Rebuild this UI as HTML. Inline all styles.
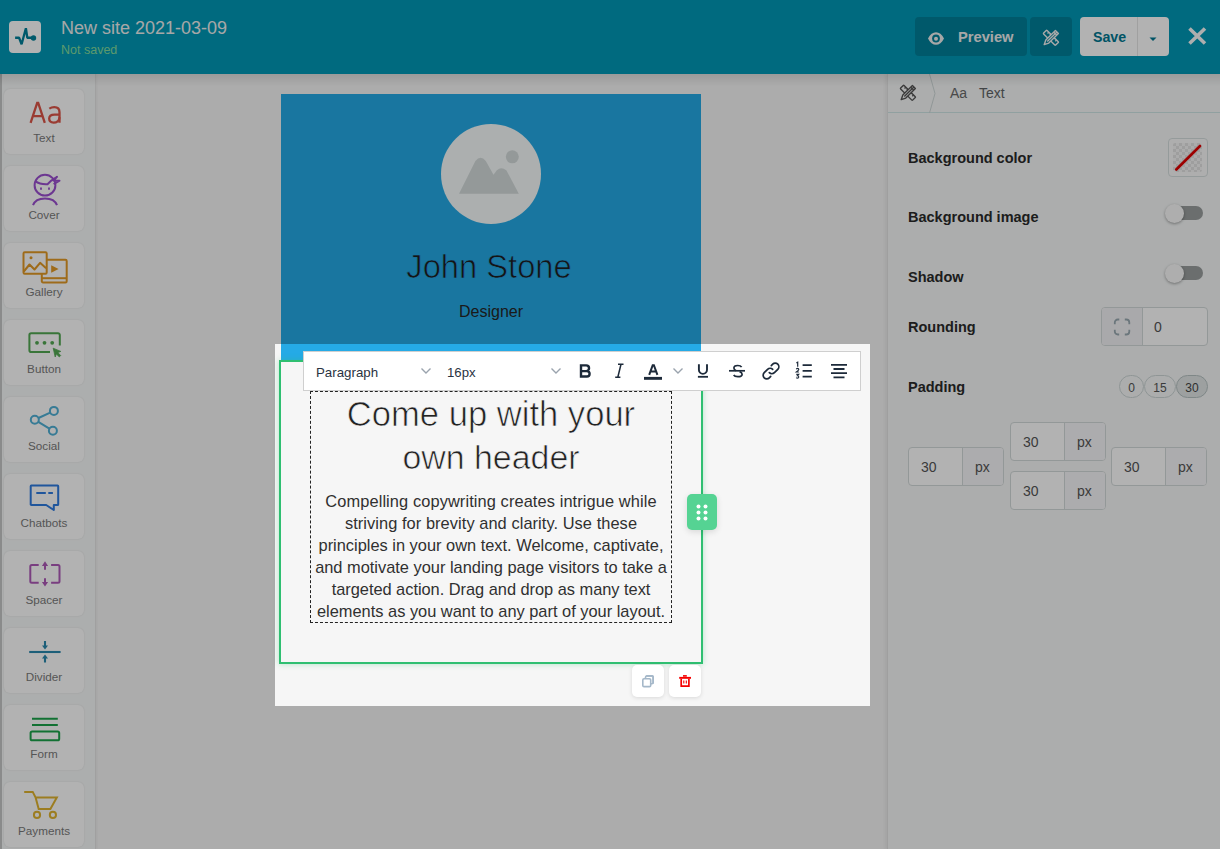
<!DOCTYPE html>
<html><head><meta charset="utf-8">
<style>
*{box-sizing:border-box;margin:0;padding:0}
html,body{width:1220px;height:849px;overflow:hidden}
body{position:relative;background:#f6f6f6;font-family:"Liberation Sans",sans-serif;color:#222}
.a{position:absolute}
.nw{white-space:nowrap}
/* header */
#hdr{left:0;top:0;width:1220px;height:74px;background:#0099b6}
#hdrsh{left:0;top:74px;width:1220px;height:12px;background:linear-gradient(rgba(0,0,0,.1),rgba(0,0,0,0))}
/* sidebar */
#side{left:0;top:74px;width:95.5px;height:775px;background:#f7f9f9;border-right:1.5px solid #e6e6e6;box-shadow:1px 0 2px rgba(0,0,0,.04)}
#sidestrip{left:0;top:74px;width:2px;height:775px;background:#c6c8c8}
.card{left:4px;width:80px;height:65px;background:#fff;border-radius:6px;box-shadow:0 0 2px rgba(0,0,0,.1)}
.lbl{left:4px;width:80px;text-align:center;font-size:11.7px;color:#7a7a7a;line-height:12px}
/* right panel */
#rp{left:887px;top:74px;width:333px;height:775px;background:#f6f8f8;border-left:1px solid #e4e4e4;box-shadow:-2px 0 3px rgba(0,0,0,.05)}
.rl{left:908px;font-size:14.5px;font-weight:700;color:#2a2a2a;line-height:16px}
.pl{left:281px;width:420px;text-align:center;font-size:16.4px;line-height:22px;color:#303030}
.inp{background:#fff;border:1px solid #d3dada;border-radius:4px}
</style></head><body>

<!-- ============ HEADER ============ -->
<div class="a" id="hdr"></div>
<div class="a" style="left:9px;top:21px;width:32px;height:32px;border-radius:4px;background:#fff"></div>
<div class="a nw" style="left:61px;top:18px;font-size:18px;line-height:20px;color:#f0f0f0">New site 2021-03-09</div>
<div class="a nw" style="left:61px;top:42.5px;font-size:12.5px;line-height:14px;color:#86dc9c">Not saved</div>

<div class="a" style="left:915px;top:17px;width:112px;height:39px;border-radius:4px;background:#00809a"></div>
<div class="a nw" style="left:958px;top:29px;font-size:14.7px;line-height:17px;font-weight:700;color:#f0f0f0">Preview</div>
<div class="a" style="left:1030px;top:17px;width:42px;height:39px;border-radius:4px;background:#00809a"></div>
<div class="a" style="left:1080px;top:17px;width:89px;height:39px;border-radius:4px;background:#fff"></div>
<div class="a" style="left:1137px;top:17px;width:1px;height:39px;background:#e6e6e6"></div>
<div class="a nw" style="left:1093px;top:29px;font-size:14.2px;line-height:17px;font-weight:700;color:#007891">Save</div>
<svg class="a" style="left:1145px;top:30.5px" width="16" height="16" viewBox="0 0 16 16"><path d="M4.5 6.5h7l-3.5 3.5z" fill="#007891"/></svg>
<svg class="a" style="left:1186px;top:26px" width="22" height="20" viewBox="0 0 22 20"><path d="M3.5 2.5L19 17.5M19 2.5L3.5 17.5" stroke="#fafafa" stroke-width="3.6" fill="none"/></svg>
<!-- logo pulse -->
<svg class="a" style="left:9px;top:21px" width="32" height="32" viewBox="0 0 32 32"><path d="M6.1 16.75h4L12.6 23.3 16.9 7.2l1.4 9.55h6" stroke="#00809a" stroke-width="2.3" fill="none" stroke-linejoin="bevel" stroke-linecap="butt"/><circle cx="24.5" cy="17" r="2.7" fill="#00809a"/></svg>
<!-- eye -->
<svg class="a" style="left:926px;top:28px" width="20" height="20" viewBox="0 0 20 20"><path d="M2 10.5C4 6.2 7 4.2 10 4.2s6 2 8 6.3C16 14.8 13 16.8 10 16.8s-6-2-8-6.3z" fill="#f0f0f0"/><circle cx="10" cy="10.5" r="3.9" fill="#00809a"/><circle cx="10" cy="10.7" r="2" fill="#f0f0f0"/></svg>
<!-- tools -->
<svg class="a" style="left:1038px;top:25px" width="26" height="26" viewBox="0 0 26 26" fill="none" stroke="#f2f2f2" stroke-width="1.4" stroke-linejoin="round"><g transform="translate(12.95 12.8) rotate(45)"><rect x="-8.5" y="-2.45" width="17" height="4.9" rx=".6"/><path d="M-5.5 -2.45v1.8M-2.8 -2.45v1.2M2.8 -2.45v1.2M5.5 -2.45v1.8"/></g><g transform="translate(12.55 13.3) rotate(-45)"><path d="M9 -2.1H-4.6L-9 0-4.6 2.1H9z" fill="#00809a"/><path d="M9 0H-4.6M6.6 -2.1v4.2"/></g></svg>


<!-- ============ SIDEBAR ============ -->
<div class="a" id="side"></div>
<div class="a" id="sidestrip"></div>
<div class="a card" style="top:89px"></div>
<div class="a lbl nw" style="top:132px">Text</div>
<div class="a card" style="top:166px"></div>
<div class="a lbl nw" style="top:209px">Cover</div>
<div class="a card" style="top:243px"></div>
<div class="a lbl nw" style="top:286px">Gallery</div>
<div class="a card" style="top:320px"></div>
<div class="a lbl nw" style="top:363px">Button</div>
<div class="a card" style="top:397px"></div>
<div class="a lbl nw" style="top:440px">Social</div>
<div class="a card" style="top:474px"></div>
<div class="a lbl nw" style="top:517px">Chatbots</div>
<div class="a card" style="top:551px"></div>
<div class="a lbl nw" style="top:594px">Spacer</div>
<div class="a card" style="top:628px"></div>
<div class="a lbl nw" style="top:671px">Divider</div>
<div class="a card" style="top:705px"></div>
<div class="a lbl nw" style="top:748px">Form</div>
<div class="a card" style="top:782px"></div>
<div class="a lbl nw" style="top:825px">Payments</div>
<!-- Text Aa -->
<svg class="a" style="left:14px;top:90px" width="60" height="60" viewBox="0 0 60 60" fill="none" stroke="#dd5548" stroke-width="2.3"><path d="M16.6 32.8L23.2 12.9h1L30.8 32.8M19.2 26.2h9.1"/><path d="M45.5 32.8V22.3c0-3.4-1.8-5.1-5.2-5.1-1.9 0-3.6.5-5 1.4"/><path d="M45.5 24.6h-5c-3.4 0-5.3 1.3-5.3 4 0 2.4 1.7 4 4.4 4 2.9 0 5.9-1.6 5.9-5.3"/></svg>
<!-- Cover -->
<svg class="a" style="left:14px;top:168px" width="60" height="60" viewBox="0 0 60 60" fill="none" stroke="#9b4fd0" stroke-width="2"><circle cx="31" cy="17.2" r="10.4"/><path d="M21.2 13.1Q26 16.6 33.5 16.2L37.3 12.6 43 8.8 39.6 12.5 45.5 12.7 39.6 16.2" stroke-linejoin="round"/><path d="M19 37.2c1.5-4.2 5.5-6.8 12-6.8s10.5 2.6 12 6.8"/><path d="M27 19.5v2.2M35 19.5v2.2" stroke-width="1.8"/></svg>
<!-- Gallery -->
<svg class="a" style="left:14px;top:245px" width="60" height="60" viewBox="0 0 60 60" fill="none" stroke="#e39a26" stroke-width="2" stroke-linejoin="round"><rect x="9.5" y="7.2" width="23.2" height="21.5" rx="1.2"/><path d="M32.7 14.8h18.8a1.2 1.2 0 0 1 1.2 1.2v20.3a1.2 1.2 0 0 1-1.2 1.2H29a1.2 1.2 0 0 1-1.2-1.2v-7.5"/><path d="M28 33.2h24.5"/><circle cx="17" cy="12.7" r="1.5" fill="#e39a26" stroke="none"/><path d="M9.8 26.5l5.7-7 5 5 5.6-6.7 6 5.4"/><path d="M37.2 20.2l7.4 3.8-7.4 3.7z" fill="#e39a26" stroke="none"/></svg>
<!-- Button -->
<svg class="a" style="left:14px;top:320px" width="60" height="60" viewBox="0 0 60 60" fill="none" stroke="#52a852" stroke-width="2"><path d="M36 32H17.2a1.8 1.8 0 0 1-1.8-1.8V15.1a1.8 1.8 0 0 1 1.8-1.8H44a1.8 1.8 0 0 1 1.8 1.8v10.5"/><circle cx="23" cy="22.8" r="1.9" fill="#52a852" stroke="none"/><circle cx="30.5" cy="22.8" r="1.9" fill="#52a852" stroke="none"/><circle cx="38.2" cy="22.8" r="1.9" fill="#52a852" stroke="none"/><path d="M39.2 28.2l7.6 3.2-3 1.2 2.9 2.9-1.4 1.4-2.9-2.9-1.2 3z" fill="#52a852" stroke="#52a852" stroke-width="0.8" stroke-linejoin="round"/></svg>
<!-- Social -->
<svg class="a" style="left:14px;top:395px" width="60" height="60" viewBox="0 0 60 60" fill="none" stroke="#4fb0d6" stroke-width="2"><circle cx="39.9" cy="15.9" r="4"/><circle cx="20.8" cy="24.7" r="4"/><circle cx="38.9" cy="35.7" r="4"/><path d="M24.5 23l11.7-5.4M24.3 26.8l11.1 6.8"/></svg>
<!-- Chatbots -->
<svg class="a" style="left:14px;top:475px" width="60" height="60" viewBox="0 0 60 60" fill="none" stroke="#2f7be0" stroke-width="2" stroke-linejoin="round"><path d="M17.3 10.6h26.3a.6.6 0 0 1 .6.6v18.2a.6.6 0 0 1-.6.6h-3.8v5l-7.6-5H17.3a.6.6 0 0 1-.6-.6V11.2a.6.6 0 0 1 .6-.6z"/><path d="M22.3 18h9.5M34.3 18h4.6" stroke-width="2.1"/></svg>
<!-- Spacer -->
<svg class="a" style="left:14px;top:550px" width="60" height="60" viewBox="0 0 60 60" fill="none" stroke="#ae5ab8" stroke-width="2"><path d="M24.7 15H17.8a1.5 1.5 0 0 0-1.5 1.5v14.8a1.5 1.5 0 0 0 1.5 1.5h6.9M37.1 15H44a1.5 1.5 0 0 1 1.5 1.5v14.8a1.5 1.5 0 0 1-1.5 1.5h-6.9"/><path d="M31 19.8V15.5M31 28.3v4.2"/><path d="M27.9 16L31 11.3l3.1 4.7zM27.9 32L31 36.5l3.1-4.5z" fill="#ae5ab8" stroke="none"/></svg>
<!-- Divider -->
<svg class="a" style="left:14px;top:628px" width="60" height="60" viewBox="0 0 60 60" fill="none" stroke="#2a88ae" stroke-width="2.1"><path d="M15.2 24h31.4"/><path d="M31 13v5M31 34.6v-5"/><path d="M28 17.4L31 21.4l3-4zM28 30.4L31 26.4l3 4z" fill="#2a88ae" stroke="none"/></svg>
<!-- Form -->
<svg class="a" style="left:14px;top:705px" width="60" height="60" viewBox="0 0 60 60" fill="none" stroke="#1ba34a" stroke-width="2"><path d="M18 13.8h25.8M18 20h25.8"/><rect x="16.6" y="26.5" width="28.6" height="8.8" rx="1.6"/></svg>
<!-- Payments -->
<svg class="a" style="left:14px;top:782px" width="60" height="60" viewBox="0 0 60 60" fill="none" stroke="#e0b430" stroke-width="2"><path d="M10.2 9.9h8.5l2.9 5.6h21.2l-6.4 11.4H24.7l-3.1-11.4"/><circle cx="23" cy="32.9" r="3.1"/><circle cx="38.9" cy="32.9" r="3.1"/></svg>


<!-- ============ CANVAS ============ -->
<div class="a" style="left:281px;top:94px;width:420px;height:266px;background:#25aae6"></div>
<div class="a" style="left:441px;top:124px;width:100px;height:100px;border-radius:50%;background:#f6fbfb"></div>
<svg class="a" style="left:441px;top:124px" width="100" height="100" viewBox="0 0 100 100"><path d="M18 69.8L34.4 37.1Q39.6 30.5 44.8 37.1L52.5 50.8 55.8 46.2Q60.4 42 65.5 46.5L77.8 69.8z" fill="#d5dcdc"/><circle cx="71.3" cy="32.8" r="6.5" fill="#d5dcdc"/></svg>
<div class="a nw" style="left:279px;top:246.5px;width:420px;text-align:center;font-size:32.7px;line-height:40px;color:#1e1e1e;-webkit-text-stroke:.7px #25aae6">John Stone</div>
<div class="a nw" style="left:281px;top:302.5px;width:420px;text-align:center;font-size:16px;line-height:18px;color:#262626">Designer</div>

<!-- section -->
<div class="a" style="left:279px;top:360px;width:424px;height:304px;border:2px solid #2fbf71;box-shadow:0 0 6px rgba(47,191,113,.35)"></div>
<div class="a" style="left:310px;top:391px;width:362px;height:232px;border:1px dashed #222"></div>
<div class="a nw" style="left:281px;top:393px;width:420px;text-align:center;font-size:34.6px;line-height:43px;color:#222;-webkit-text-stroke:.7px #f6f6f6">Come up with your</div>
<div class="a nw" style="left:281px;top:436px;width:420px;text-align:center;font-size:33.9px;line-height:43px;color:#222;-webkit-text-stroke:.7px #f6f6f6">own header</div>
<div class="a nw pl" id="pl0" style="top:490px;letter-spacing:.094px">Compelling copywriting creates intrigue while</div>
<div class="a nw pl" id="pl1" style="top:512px;letter-spacing:.064px">striving for brevity and clarity. Use these</div>
<div class="a nw pl" id="pl2" style="top:534px">principles in your own text. Welcome, captivate,</div>
<div class="a nw pl" id="pl3" style="top:556px">and motivate your landing page visitors to take a</div>
<div class="a nw pl" id="pl4" style="top:578px;letter-spacing:-.026px">targeted action. Drag and drop as many text</div>
<div class="a nw pl" id="pl5" style="top:600px">elements as you want to any part of your layout.</div>


<!-- drag handle -->
<div class="a" style="left:687px;top:494px;width:30px;height:36px;border-radius:5px;background:#55d393;box-shadow:0 2px 6px rgba(0,0,0,.12)"></div>
<svg class="a" style="left:687px;top:494px" width="30" height="36" viewBox="0 0 30 36" fill="#fff"><circle cx="11.5" cy="12.5" r="2"/><circle cx="18.5" cy="12.5" r="2"/><circle cx="11.5" cy="18.5" r="2"/><circle cx="18.5" cy="18.5" r="2"/><circle cx="11.5" cy="24.5" r="2"/><circle cx="18.5" cy="24.5" r="2"/></svg>

<!-- copy / delete -->
<div class="a" style="left:632px;top:665px;width:32px;height:32px;border-radius:5px;background:#fff;box-shadow:0 1px 4px rgba(0,0,0,.12)"></div>
<svg class="a" style="left:632px;top:665px" width="32" height="32" viewBox="0 0 32 32" fill="none" stroke="#a5b8c9" stroke-width="1.6"><path d="M14.2 10.9h6a.9.9 0 0 1 .9.9v6.6" /><rect x="10.8" y="13.7" width="7.9" height="7.9" rx="1.2" fill="#fff"/><path d="M13.5 13.7v-1.5a1.2 1.2 0 0 1 1.2-1.2h5.3a1.2 1.2 0 0 1 1.2 1.2v5.4a1.2 1.2 0 0 1-1.2 1.2h-1.3"/></svg>
<div class="a" style="left:669px;top:665px;width:32px;height:32px;border-radius:5px;background:#fff;box-shadow:0 1px 4px rgba(0,0,0,.12)"></div>
<svg class="a" style="left:669px;top:665px" width="32" height="32" viewBox="0 0 32 32"><rect x="14" y="10.1" width="3.8" height="1.6" fill="#f50000"/><rect x="10.2" y="11.9" width="11.8" height="1.9" fill="#f50000"/><path d="M12.2 13.8v7.4h7.7v-7.4" stroke="#f50000" stroke-width="1.7" fill="none"/><path d="M14.8 15.5v3M17.3 15.5v3" stroke="#f50000" stroke-width="1.1"/></svg>

<!-- toolbar -->
<div class="a" style="left:303px;top:351px;width:558px;height:40px;background:#fff;border:1px solid #cfcfcf"></div>
<div class="a nw" style="left:316px;top:365px;font-size:13.3px;line-height:16px;color:#2a3342">Paragraph</div>
<div class="a nw" style="left:447px;top:365px;font-size:13.2px;line-height:16px;color:#2a3342">16px</div>
<svg class="a" style="left:418px;top:363px" width="16" height="16" viewBox="0 0 16 16" fill="none" stroke="#9aa3ad" stroke-width="1.4"><path d="M3.5 5.5L8 10l4.5-4.5"/></svg>
<svg class="a" style="left:548px;top:363px" width="16" height="16" viewBox="0 0 16 16" fill="none" stroke="#9aa3ad" stroke-width="1.4"><path d="M3.5 5.5L8 10l4.5-4.5"/></svg>
<svg class="a" style="left:576px;top:360px" width="20" height="22" viewBox="0 0 20 22" fill="none" stroke="#1d2a3a" stroke-width="2.4"><path d="M5 4.2V17.7M3.8 5.4H10.2A2.85 2.85 0 0 1 10.2 11.1H5M5 11.1H10.9A2.7 2.7 0 0 1 10.9 16.5H3.8"/></svg>
<svg class="a" style="left:610px;top:360px" width="18" height="22" viewBox="0 0 18 22" fill="none" stroke="#1d2a3a" stroke-width="1.5"><path d="M8 4.2h5.5M5.2 17.2h5.2M11 4.2 7.8 17.2"/></svg>
<svg class="a" style="left:642px;top:360px" width="22" height="22" viewBox="0 0 22 22"><path d="M7.2 14.8L10.7 5.2h1.2l3.5 9.6M8.5 11.6h5.6" stroke="#1d2a3a" stroke-width="2" fill="none"/><rect x="2" y="16.9" width="18" height="2.9" fill="#1d2a3a"/></svg>
<svg class="a" style="left:670px;top:363px" width="16" height="16" viewBox="0 0 16 16" fill="none" stroke="#9aa3ad" stroke-width="1.4"><path d="M3.5 5.5L8 10l4.5-4.5"/></svg>
<svg class="a" style="left:692px;top:360px" width="22" height="22" viewBox="0 0 22 22" fill="none" stroke="#1d2a3a" stroke-width="1.9"><path d="M6.9 4.2v5.6a4.05 4.05 0 0 0 8.1 0V4.2"/><path d="M5.9 16.8h10.1" stroke-width="1.8"/></svg>
<svg class="a" style="left:726px;top:360px" width="22" height="22" viewBox="0 0 22 22" fill="none" stroke="#1d2a3a" stroke-width="1.7"><path d="M15.6 7.2c-.6-1.1-2-1.7-3.9-1.7-2.2 0-3.8 1-3.8 2.6 0 1.2.8 2 2.2 2.6M13.6 11.6c1.5.6 2.5 1.4 2.5 2.6 0 1.6-1.8 2.5-4.3 2.5-2 0-3.5-.6-4.1-1.7"/><path d="M3 10.8h16"/></svg>
<svg class="a" style="left:760px;top:360px" width="22" height="22" viewBox="0 0 22 22" fill="none" stroke="#1d2a3a" stroke-width="1.7" stroke-linecap="round"><path d="M9.3 12.7a3.6 3.6 0 0 0 5.1 0l3.4-3.4a3.6 3.6 0 0 0-5.1-5.1l-1.4 1.4"/><path d="M12.7 9.3a3.6 3.6 0 0 0-5.1 0l-3.4 3.4a3.6 3.6 0 0 0 5.1 5.1l1.4-1.4"/></svg>
<svg class="a" style="left:794px;top:360px" width="22" height="22" viewBox="0 0 22 22" fill="none" stroke="#1d2a3a"><path d="M8.6 5.1h9.2M8.6 10.8h9.2M8.6 16.6h9.2" stroke-width="1.8"/><path d="M2.4 2.9l1.3-.6v4.4" stroke-width="1.2"/><path d="M2.3 9.2c.3-.6.8-.8 1.4-.8.7 0 1.1.4 1.1 1 0 .8-1.1 1.4-2.5 2.6h2.6" stroke-width="1.1"/><path d="M2.3 14.4h2.4l-1.3 1.4c.9 0 1.4.4 1.4 1.1s-.6 1.2-1.4 1.2c-.5 0-.9-.2-1.2-.5" stroke-width="1.1"/></svg>
<svg class="a" style="left:828px;top:360px" width="22" height="22" viewBox="0 0 22 22" stroke="#1d2a3a" stroke-width="1.8"><path d="M3 4.8h16M5.5 9h11M3 13.2h16M5.5 17.4h11"/></svg>


<!-- ============ RIGHT PANEL ============ -->
<div class="a" id="rp"></div>
<div class="a" style="left:888px;top:112px;width:332px;height:1px;background:#cfe6e6"></div>
<svg class="a" style="left:926px;top:74px" width="12" height="39" viewBox="0 0 12 39" fill="none" stroke="#cfd8d8" stroke-width="1"><path d="M3.5 0L9 19.5 3.5 39"/></svg>
<svg class="a" style="left:895px;top:80px" width="26" height="26" viewBox="0 0 26 26" fill="none" stroke="#555" stroke-width="1.35" stroke-linejoin="round"><g transform="translate(12.95 12.8) rotate(45)"><rect x="-8.5" y="-2.45" width="17" height="4.9" rx=".6"/><path d="M-5.5 -2.45v1.8M-2.8 -2.45v1.2M2.8 -2.45v1.2M5.5 -2.45v1.8"/></g><g transform="translate(12.55 13.3) rotate(-45)"><path d="M9 -2.1H-4.6L-9 0-4.6 2.1H9z" fill="#f6f8f8"/><path d="M9 0H-4.6M6.6 -2.1v4.2"/></g></svg>
<div class="a nw" style="left:950px;top:85px;font-size:14px;line-height:16px;color:#6a6a6a">Aa</div>
<div class="a nw" style="left:979px;top:85px;font-size:14px;line-height:16px;color:#5f6466">Text</div>

<div class="a rl nw" style="top:150px">Background color</div>
<div class="a rl nw" style="top:209px">Background image</div>
<div class="a rl nw" style="top:269px">Shadow</div>
<div class="a rl nw" style="top:319px">Rounding</div>
<div class="a rl nw" style="top:379px">Padding</div>

<!-- swatch -->
<div class="a" style="left:1168px;top:138px;width:40px;height:39px;border:1px solid #d6dede;border-radius:4px;background:#fafafa"></div>
<svg class="a" style="left:1173px;top:143px" width="29" height="29" viewBox="0 0 29 29"><defs><pattern id="chk" width="6" height="6" patternUnits="userSpaceOnUse"><rect width="6" height="6" fill="#f5f5f5"/><rect width="3" height="3" fill="#e3e3e3"/><rect x="3" y="3" width="3" height="3" fill="#e3e3e3"/></pattern></defs><rect width="29" height="29" rx="2" fill="url(#chk)"/><path d="M3.3 26.5L27 3" stroke="#e00000" stroke-width="2.7" stroke-linecap="round"/></svg>

<!-- toggles -->
<div class="a" style="left:1174px;top:206px;width:29px;height:14px;border-radius:7px;background:#9a9e9e"></div>
<div class="a" style="left:1165px;top:203.5px;width:19px;height:19px;border-radius:50%;background:#fafafa;box-shadow:0 1px 3px rgba(0,0,0,.35)"></div>
<div class="a" style="left:1174px;top:266px;width:29px;height:14px;border-radius:7px;background:#9a9e9e"></div>
<div class="a" style="left:1165px;top:263.5px;width:19px;height:19px;border-radius:50%;background:#fafafa;box-shadow:0 1px 3px rgba(0,0,0,.35)"></div>

<!-- rounding -->
<div class="a inp" style="left:1101px;top:307px;width:107px;height:39px"></div>
<div class="a" style="left:1102px;top:308px;width:41px;height:37px;background:#f3f3f5;border-right:1px solid #d3dada;border-radius:3px 0 0 3px"></div>
<svg class="a" style="left:1112px;top:317px" width="20" height="20" viewBox="0 0 20 20" fill="none" stroke="#9aaab2" stroke-width="1.8"><path d="M2.8 7.2V5.5a3 3 0 0 1 3-3h1.5M12.8 2.5h1.5a3 3 0 0 1 3 3v1.7M17.3 12.8v1.7a3 3 0 0 1-3 3h-1.5M7.2 17.5H5.8a3 3 0 0 1-3-3v-1.7"/></svg>
<div class="a nw" style="left:1154px;top:319px;font-size:14px;line-height:16px;color:#555">0</div>

<!-- padding chips -->
<div class="a" style="left:1119px;top:375px;width:25px;height:23px;border:1px solid #cdd6d6;border-radius:12px;background:#f6f8f8;font-size:12px;line-height:24px;text-align:center;color:#555">0</div>
<div class="a" style="left:1144px;top:375px;width:32px;height:23px;border:1px solid #cdd6d6;border-radius:12px;background:#f6f8f8;font-size:12px;line-height:24px;text-align:center;color:#555">15</div>
<div class="a" style="left:1176px;top:375px;width:32px;height:23px;border:1px solid #b7c2c2;border-radius:12px;background:#e1e6e6;font-size:12px;line-height:24px;text-align:center;color:#444">30</div>

<!-- padding inputs -->
<div class="a inp" style="left:908px;top:447px;width:96px;height:39px"></div>
<div class="a" style="left:962px;top:448px;width:41px;height:37px;background:#f7f7f9;border-left:1px solid #d3dada;border-radius:0 3px 3px 0"></div>
<div class="a nw" style="left:921px;top:459px;font-size:14px;line-height:16px;color:#555">30</div>
<div class="a nw" style="left:975px;top:459px;font-size:14px;line-height:16px;color:#555">px</div>
<div class="a inp" style="left:1010px;top:422px;width:96px;height:39px"></div>
<div class="a" style="left:1064px;top:423px;width:41px;height:37px;background:#f7f7f9;border-left:1px solid #d3dada;border-radius:0 3px 3px 0"></div>
<div class="a nw" style="left:1023px;top:434px;font-size:14px;line-height:16px;color:#555">30</div>
<div class="a nw" style="left:1077px;top:434px;font-size:14px;line-height:16px;color:#555">px</div>
<div class="a inp" style="left:1010px;top:471px;width:96px;height:39px"></div>
<div class="a" style="left:1064px;top:472px;width:41px;height:37px;background:#f7f7f9;border-left:1px solid #d3dada;border-radius:0 3px 3px 0"></div>
<div class="a nw" style="left:1023px;top:483px;font-size:14px;line-height:16px;color:#555">30</div>
<div class="a nw" style="left:1077px;top:483px;font-size:14px;line-height:16px;color:#555">px</div>
<div class="a inp" style="left:1111px;top:447px;width:96px;height:39px"></div>
<div class="a" style="left:1165px;top:448px;width:41px;height:37px;background:#f7f7f9;border-left:1px solid #d3dada;border-radius:0 3px 3px 0"></div>
<div class="a nw" style="left:1124px;top:459px;font-size:14px;line-height:16px;color:#555">30</div>
<div class="a nw" style="left:1178px;top:459px;font-size:14px;line-height:16px;color:#555">px</div>


<div class="a" id="hdrsh"></div>
<!-- ============ OVERLAY ============ -->
<div class="a" style="left:275px;top:344px;width:595px;height:362px;box-shadow:0 0 0 3000px rgba(0,0,0,.3)"></div>

</body></html>
